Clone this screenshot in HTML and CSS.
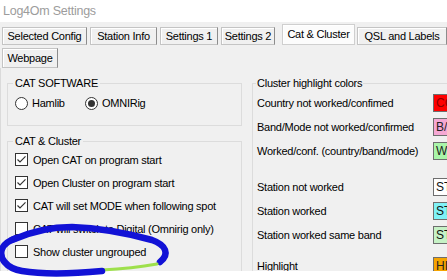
FILE: index.html
```html
<!DOCTYPE html>
<html lang="en">
<head>
    <meta charset="UTF-8">
    <meta name="viewport" content="width=device-width, initial-scale=1.0">
    <title>Log4Om Settings</title>
    <link rel="stylesheet" href="styles.css">
</head>
<body>
    <div class="title">Log4Om Settings</div>
    <div class="window">
        <div class="tab-row tab-row-top">
            <span class="tab tab-config">Selected Config</span>
            <span class="tab tab-station">Station Info</span>
            <span class="tab tab-set1">Settings 1</span>
            <span class="tab tab-set2">Settings 2</span>
            <span class="tab tab-cat active">Cat &amp; Cluster</span>
            <span class="tab tab-qsl">QSL and Labels</span>
        </div>
        <div class="tab-row tab-row-bottom">
            <span class="tab tab-web">Webpage</span>
        </div>
        <div class="panel">
            <div class="col-left">
                <fieldset class="group group-software">
                    <legend>CAT SOFTWARE</legend>
                    <div class="radio-row">
                        <label class="opt opt-hamlib"><span class="radio"></span>Hamlib</label>
                        <label class="opt"><span class="radio on"></span>OMNIRig</label>
                    </div>
                </fieldset>
                <fieldset class="group group-cat">
                    <legend>CAT &amp; Cluster</legend>
                    <label class="opt check-row"><span class="check"><svg viewBox="0 0 11 11" width="11" height="11"><polyline points="1.5,5.5 4,8 9.5,2.3" fill="none" stroke="#333" stroke-width="1.2"/></svg></span>Open CAT on program start</label>
                    <label class="opt check-row"><span class="check"><svg viewBox="0 0 11 11" width="11" height="11"><polyline points="1.5,5.5 4,8 9.5,2.3" fill="none" stroke="#333" stroke-width="1.2"/></svg></span>Open Cluster on program start</label>
                    <label class="opt check-row"><span class="check"><svg viewBox="0 0 11 11" width="11" height="11"><polyline points="1.5,5.5 4,8 9.5,2.3" fill="none" stroke="#333" stroke-width="1.2"/></svg></span>CAT will set MODE when following spot</label>
                    <label class="opt check-row"><span class="check"></span>CAT will switch to Digital (Omnirig only)</label>
                    <label class="opt check-row"><span class="check"></span>Show cluster ungrouped</label>
                </fieldset>
            </div>
            <fieldset class="group group-colors">
                <legend>Cluster highlight colors</legend>
                <div class="color-row first"><span class="color-name">Country not worked/confimed</span><span class="swatch sw-country">CO</span></div>
                <div class="color-row"><span class="color-name">Band/Mode not worked/confirmed</span><span class="swatch sw-band">B/</span></div>
                <div class="color-row"><span class="color-name">Worked/conf. (country/band/mode)</span><span class="swatch sw-worked">W</span></div>
                <div class="color-row spaced"><span class="color-name">Station not worked</span><span class="swatch sw-st-new">ST</span></div>
                <div class="color-row"><span class="color-name">Station worked</span><span class="swatch sw-st-worked">ST</span></div>
                <div class="color-row"><span class="color-name">Station worked same band</span><span class="swatch sw-st-band">ST</span></div>
                <div class="color-row spaced-sm"><span class="color-name">Highlight</span><span class="swatch sw-highlight">HI</span></div>
            </fieldset>
        </div>
    </div>
    <svg class="marker" viewBox="0 0 447 280" width="447" height="280">
        <path d="M 12 240 C 30 232, 50 227, 72 227 C 100 228, 130 234, 152 240 C 166 245, 170 254, 160 262" fill="none" stroke="#1212d6" stroke-width="6.5" stroke-linecap="round"/>
        <path d="M 157 264 C 140 267, 120 269, 102 270" fill="none" stroke="#9ee04c" stroke-width="3" stroke-linecap="round"/>
        <path d="M 102 271 C 70 274, 40 274, 22 271 C 5 268, -1 257, 2 249 C 4 244, 8 241, 16 238" fill="none" stroke="#1212d6" stroke-width="6.5" stroke-linecap="round"/>
    </svg>
</body>
</html>
```
FILE: styles.css
```css
body {
    margin: 0;
    width: 447px;
    height: 280px;
    overflow: hidden;
    background: #fff;
    font-family: "Segoe UI", "Liberation Sans", Arial, sans-serif;
    font-size: 11px;
    letter-spacing: -0.25px;
    color: #000;
    position: relative;
}

.title {
    height: 22px;
    line-height: 22px;
    padding-left: 3px;
    font-size: 12.5px;
    color: #9c9c9c;
}

.window {
    background: #f0f0f0;
    height: 249px;
    overflow: hidden;
}

/* tabs */
.tab-row {
    display: flex;
    align-items: flex-end;
    padding-left: 2px;
}
.tab-row-top {
    padding-top: 2px;
    height: 21px;
    gap: 3px;
}
.tab-row-bottom {
    margin-top: 3px;
}
.tab {
    box-sizing: border-box;
    height: 18px;
    line-height: 16px;
    text-align: center;
    background: #f0f0f0;
    border: 1px solid #c4c4c4;
    border-right-color: #8c8c8c;
    box-shadow: inset 1px 1px #fff;
    white-space: nowrap;
}
.tab.active {
    height: 21px;
    line-height: 19px;
    background: #fcfcfc;
    border-color: #cfcfcf;
    margin-left: 4px;
    margin-right: -1px;
}
.tab-config { width: 85px; }
.tab-station { width: 67px; }
.tab-set1 { width: 58px; }
.tab-set2 { width: 54px; }
.tab-cat { width: 73px; }
.tab-qsl { width: 90px; }
.tab-web {
    width: 56px;
    height: 20px;
    line-height: 18px;
}

/* content */
.panel {
    display: flex;
    align-items: flex-start;
    border-left: 1px solid #dadada;
    padding: 8px 0 0 6px;
}
.col-left {
    width: 235px;
    flex-shrink: 0;
}
.group {
    margin: 0;
    padding: 0 0 0 7px;
    border: 1px solid #dcdcdc;
    min-width: 0;
}
.group legend {
    padding: 0 2px;
    margin-left: -2px;
    line-height: 14px;
}
.group-software {
    padding-bottom: 12px;
}
.group-cat {
    margin-top: 8px;
    height: 160px;
}
.group-colors {
    margin-left: 10px;
    padding-left: 4px;
    width: 210px;
    flex-shrink: 0;
    height: 220px;
}
.group-colors legend {
    margin-left: -1px;
    padding: 0 1px;
}

.opt {
    display: flex;
    align-items: center;
}
.radio-row {
    display: flex;
    height: 20px;
    margin-top: 3px;
}
.opt-hamlib {
    width: 70px;
}
.radio {
    box-sizing: border-box;
    width: 13px;
    height: 13px;
    border: 1px solid #333;
    border-radius: 50%;
    background: #fff;
    margin-right: 4px;
    display: flex;
    align-items: center;
    justify-content: center;
}
.radio.on::after {
    content: "";
    width: 7px;
    height: 7px;
    border-radius: 50%;
    background: #333;
}
.check-row {
    height: 23px;
}
.check {
    box-sizing: border-box;
    width: 13px;
    height: 13px;
    border: 1px solid #333;
    background: #fff;
    margin-right: 5px;
    display: flex;
}

.color-row {
    display: flex;
    align-items: center;
    height: 24px;
}
.color-row.first {
    margin-top: 1px;
}
.color-row.spaced {
    margin-top: 12px;
}
.color-row.spaced-sm {
    margin-top: 7px;
}
.color-name {
    width: 176px;
    flex-shrink: 0;
}
.swatch {
    box-sizing: border-box;
    width: 60px;
    height: 18px;
    line-height: 16px;
    padding-left: 2px;
    border: 1px solid #6e6e6e;
    font-size: 12px;
    letter-spacing: 0;
}
.sw-country { background: #ff0000; color: #8a0000; }
.sw-band { background: #f5a8d4; color: #222; }
.sw-worked { background: #a9f5a9; color: #222; }
.sw-st-new { background: #fff; color: #111; }
.sw-st-worked { background: #7ff2f6; color: #111; }
.sw-st-band { background: #c6f2c6; color: #111; }
.sw-highlight { background: #f5a400; color: #222; }

.marker {
    position: absolute;
    top: 0;
    left: 0;
    pointer-events: none;
}
```
